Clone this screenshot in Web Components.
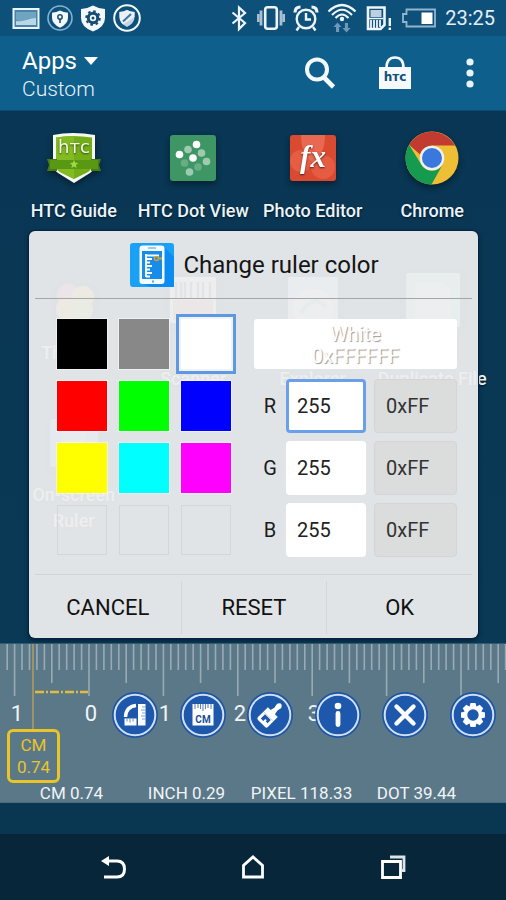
<!DOCTYPE html>
<html lang="en">
<head>
<meta charset="utf-8">
<meta name="viewport" content="width=device-width, initial-scale=1">
<title>On-screen Ruler</title>
<style>
html, body { margin: 0; }
body { font-family: Roboto, "Liberation Sans", sans-serif; color: #fff; background: #093651; }
</style>
</head>
<body>
<ruler-screen></ruler-screen>
<script>
const reset = `*{box-sizing:border-box} button{appearance:none;border:0;background:none;padding:0;margin:0;color:inherit;font:inherit;cursor:pointer} svg{display:block;flex:none}`;
function define(name, html, setup) {
  customElements.define(name, class extends HTMLElement {
    constructor() {
      super();
      this.attachShadow({ mode: 'open' });
    }
    connectedCallback() {
      if (this.shadowRoot.childNodes.length) return;
      const t = document.createElement('template');
      t.innerHTML = `<style>${reset}</style>` + (typeof html === 'function' ? html(this) : html);
      this.shadowRoot.append(t.content.cloneNode(true));
      if (setup) setup(this, this.shadowRoot);
    }
  });
}

define('status-bar', `
<style>
:host{display:flex;align-items:center;justify-content:space-between;height:36px;padding:0 11px 0 12px;background:#0d517a;color:#e4eef8}
.l{display:flex;align-items:center;gap:7px}
.r{display:flex;align-items:center;gap:8px}
time{font-size:20px;line-height:24px}
</style>
<div class="l">
<svg width="28" height="28" viewBox="0 0 28 28"><rect x="1.5" y="5" width="25" height="19" fill="#4d82a8" stroke="#eaf4fb" stroke-width="2"/><path d="M4 8h20v7q-6-2-10 1t-10 0z" fill="#6fa5c0"/><path d="M4 17q5 1 10-1t10-2v7H4z" fill="#b9d8e6"/></svg>
<svg width="26" height="28" viewBox="0 0 26 28"><circle cx="13" cy="14" r="12" fill="none" stroke="#86b3d4" stroke-width="1.6"/><path d="M13 6.500q3.500 2 8 2.200v5q0 6-8 10-8-4-8-10v-5q4.500-.2 8-2.200z" fill="#f3f8fc"/><circle cx="13" cy="13" r="2.200" fill="none" stroke="#174d73" stroke-width="1.500"/><path d="M13 15v4" stroke="#174d73" stroke-width="1.600"/></svg>
<svg width="26" height="28" viewBox="0 0 26 28"><path d="M13 1.500q5 3 12 3.500v9q0 9-12 13.500Q1 23 1 14V5q7-.5 12-3.500z" fill="#f3f8fc"/><circle cx="13" cy="14" r="4.700" fill="none" stroke="#174d73" stroke-width="3"/><circle cx="13" cy="14" r="6.800" fill="none" stroke="#174d73" stroke-width="2" stroke-dasharray="2.600 2.740"/><circle cx="13" cy="14" r="1.500" fill="#174d73"/></svg>
<svg width="28" height="30" viewBox="0 0 28 30"><circle cx="14" cy="15" r="12.800" fill="none" stroke="#f3f8fc" stroke-width="2"/><path d="M14 7q3.500 2 7.500 2v5q0 6-7.500 10-7.500-4-7.500-10V9q4 0 7.500-2z" fill="#c3d6e4"/><path d="M14 7q3.500 2 7.500 2v5L10 21.500q-3.500-3.500-3.500-8V9q4 0 7.500-2z" fill="#e9f1f7"/><path d="M10 18.500 18 11" stroke="#43749a" stroke-width="2"/></svg>
</div>
<div class="r">
<svg width="16" height="28" viewBox="2 0 16 28" overflow="visible" fill="none" stroke="#f0f6fb" stroke-width="2.200"><path d="M1.500 8.500 14 19l-6 6V3.500l6 5.500L1.500 19.500"/></svg>
<svg width="28" height="28" viewBox="0 0 28 28"><path d="M1 10v8M4 6.500v15M24 6.500v15M27 10v8" stroke="#a9bfd0" stroke-width="2.800"/><rect x="8.200" y="3.200" width="11.600" height="21.600" rx="2.500" fill="#0d517a" stroke="#f0f4f7" stroke-width="2.600"/></svg>
<svg width="26" height="28" viewBox="0 0 26 28" fill="none" stroke="#eef4f8" stroke-width="2.400"><circle cx="13" cy="15" r="9.300"/><path d="M13 9v6.500h5M6 23l-2.500 3.500M20 23l2.500 3.500"/><path d="M2 8.500Q2 3 7.500 3M24 8.500Q24 3 18.500 3" stroke-width="3.200"/></svg>
<svg width="30" height="30" viewBox="0 0 30 30" fill="none" stroke="#f0f5f8" stroke-width="2.200"><path d="M1.500 8.500Q15-4.500 28.500 8.500M5 12Q15 1.500 25 12M8.500 15Q15 8 21.500 15"/><circle cx="15" cy="16" r="2.200" fill="#f0f5f8" stroke="none"/><g fill="#6e98b8" stroke="none"><path d="m10.500 19.500 4 4.500h-2.400v5H9v-5H6.500zM19.500 29.500l-4-4.500h2.400v-5H21v5h2.500z"/></g></svg>
<svg width="28" height="28" viewBox="0 0 28 28"><path d="M3 3.500h16.500V21l-4 4H3z" fill="none" stroke="#eef4f8" stroke-width="2.600"/><rect x="5.500" y="6" width="11" height="7" fill="#bdd0df"/><path d="M6 16v8M9 16v8M12 16v8M15 16v7" stroke="#eef4f8" stroke-width="1.800"/><path d="M4 14.500h14" stroke="#eef4f8" stroke-width="1.500"/><path d="M24.800 14v8" stroke="#eef4f8" stroke-width="2.400"/><rect x="23.600" y="23.500" width="2.400" height="2.500" fill="#eef4f8"/></svg>
<svg width="36" height="28" viewBox="0 0 36 28"><path d="M5.500 5.500H34v17H5.500v-4.500H2v-8h3.500z" fill="none" stroke="#93b5cc" stroke-width="1.800"/><rect x="20.500" y="8.500" width="11" height="11.500" fill="#fff"/></svg>
<time>23:25</time>
</div>`);

define('app-header', `
<style>
:host{display:flex;align-items:center;justify-content:space-between;height:75px;padding:0 19px 0 22px;background:#0e5f8c;border-bottom:1px solid #0b4a72}
.title{padding-top:4px}
h1{margin:0;font-size:24px;line-height:28px;font-weight:400}
h1 button{display:flex;align-items:center;gap:7px}
p{margin:0;font-size:21px;line-height:28px;font-weight:300;color:#e6f2fa}
nav{display:flex;gap:41px}
</style>
<div class="title"><h1><button>Apps<svg width="14" height="8" viewBox="0 0 14 8"><path d="M0 0h14L7 8z" fill="#fff"/></svg></button></h1><p>Custom</p></div>
<nav>
<button aria-label="Search"><svg width="34" height="34" viewBox="0 0 34 34" fill="none" stroke="#f4f9fc"><circle cx="14" cy="13.500" r="10" stroke-width="4"/><path d="m20.500 21 10 10" stroke-width="4.600"/></svg></button>
<button aria-label="Store"><svg width="34" height="34" viewBox="0 0 34 34"><path d="M1 11h32v22H1z" fill="#f7fafc"/><path d="M8.500 12Q8.500 1.500 17 1.500T25.500 12" fill="none" stroke="#f7fafc" stroke-width="2.600"/><text x="17" y="25" font-family="DejaVu Sans" font-weight="700" font-size="12" text-anchor="middle" fill="#11507a">hтc</text></svg></button>
<button aria-label="More"><svg width="34" height="34" viewBox="0 0 34 34" fill="#e8f4fb"><circle cx="17" cy="6" r="3.600"/><circle cx="17" cy="17" r="3.600"/><circle cx="17" cy="28" r="3.600"/></svg></button>
</nav>`);

const art = {
guide: `<path d="M5 2q19-4 42 0v28q0 7-5 10L26 50 10 40q-5-3-5-10z" fill="#f6f9f3"/><path d="M8 4.500q16-3 36 0V31q0 5-4 8L26 46 12 39q-4-3-4-8z" fill="#73ae19"/><path d="M8 4.500Q17 3 26 3v43L12 39q-4-3-4-8z" fill="#82bb22"/><path d="M-1 26h10v12H-1l2-6zM53 26H43v12h10l-2-6z" fill="#467c13"/><path d="M2 27h48v9H2z" fill="#589812"/><path d="m26 27 1.200 2.800 3 .3-2.300 2 .7 3-2.600-1.600-2.600 1.600.7-3-2.300-2 3-.3z" fill="#a4d64a"/><text x="26" y="20" font-family="DejaVu Sans" font-size="18" text-anchor="middle" fill="#f5fbe8">hтc</text>`,
dot: `<rect x="3" y="2" width="46" height="46" rx="3" fill="#3e9664"/><g fill="#fff"><circle cx="29.500" cy="11.500" r="3.800"/><circle cx="12.500" cy="21.500" r="3.800"/><circle cx="26" cy="25" r="3.800"/><g opacity=".5"><circle cx="21" cy="16.500" r="3.800"/><circle cx="34.500" cy="20" r="3.800"/><circle cx="39.500" cy="28.500" r="3.800"/><circle cx="22.500" cy="39" r="3.800"/></g><g opacity=".22"><circle cx="17.500" cy="30" r="3.800"/><circle cx="31" cy="34" r="3.800"/></g></g>`,
photo: `<rect x="3" y="2" width="46" height="46" rx="3" fill="#d94a30"/><path d="M14 2h24q0 20-12 27Q14 22 14 2z" fill="#ef7560" opacity=".7"/><circle cx="14" cy="28" r="11" fill="#f16d55" opacity=".55"/><circle cx="36" cy="34" r="12" fill="#f16d55" opacity=".5"/><text x="26" y="34" font-family="Liberation Serif" font-weight="700" font-style="italic" font-size="31" text-anchor="middle" fill="#fff">fx</text>`,
chrome: `<circle cx="26" cy="25" r="26.500" fill="#eebf35"/><path d="M3.100 11.700A26.500 26.500 0 0 1 49 12.500H26a12.500 12.500 0 0 0-12 9z" fill="#c23b31"/><path d="M3.100 11.700A26.500 26.500 0 0 0 25.500 51.500L37 31a12.500 12.500 0 0 1-22.200-.2z" fill="#159a50"/><circle cx="26" cy="25" r="12.300" fill="#edf1f2"/><circle cx="26" cy="25" r="10" fill="#3a78dd"/>`,
themes: `<circle cx="20" cy="20" r="11" fill="#d8407c"/><circle cx="35" cy="22" r="11" fill="#e3b51c"/><circle cx="19" cy="34" r="11" fill="#f2a41f"/><circle cx="34" cy="35" r="11" fill="#9acc27"/>`,
barcode: `<rect x="3" y="2" width="46" height="46" rx="2" fill="#fff"/><path d="M9 7v16M14 7v16M18 7v16M24 7v16M31 7v16M36 7v16M43 7v16" stroke="#6b4034" stroke-width="2.500"/><path d="M6 25h40v20H6z" fill="#e57a6b"/>`,
explorer: `<rect x="1" y="2" width="50" height="50" rx="2" fill="#a8eaf2"/><circle cx="26" cy="34" r="20" fill="#fff"/><path d="M14 38q12-20 25-6" fill="none" stroke="#7bc3db" stroke-width="4"/>`,
dup: `<rect x="0" y="-2" width="54" height="54" rx="2" fill="#98ebe9"/><path d="M9 8h28l8 8v34H9z" fill="#fff"/>`,
ruler: `<rect x="2" y="2" width="48" height="48" rx="3" fill="#4bb4ff"/><rect x="14" y="6" width="24" height="40" fill="#a7d9ff"/>`
};
define('app-tile', el => `
<style>
:host{display:flex;flex-direction:column;align-items:center;min-width:0}
svg{overflow:visible;filter:drop-shadow(0 3px 3px #0006)}
a{display:flex;flex-direction:column;align-items:center;gap:13px;color:#eaf4fb;text-decoration:none;font-size:18px;line-height:26px;font-weight:500;text-align:center;white-space:nowrap;text-shadow:0 1px 2px #000a}
:host([low]) a{gap:39px}
</style>
<a href="#"><svg width="52" height="52" viewBox="0 0 52 52" aria-hidden="true">${art[el.getAttribute('icon')]}</svg><span><slot></slot></span></a>`);

define('home-grid', `
<style>
:host{display:grid;grid-template-columns:repeat(4,1fr);grid-auto-rows:142px;padding:22px 14px 0;background:linear-gradient(#093654,#093954)}
</style>
<app-tile icon="guide">HTC Guide</app-tile><app-tile icon="dot">HTC Dot View</app-tile><app-tile icon="photo">Photo Editor</app-tile><app-tile icon="chrome">Chrome</app-tile>
<app-tile icon="themes">Themes</app-tile><app-tile icon="barcode" low>Scanner</app-tile><app-tile icon="explorer" low>Explorer</app-tile><app-tile icon="dup" low>Duplicate File</app-tile>
<app-tile icon="ruler">On-screen<br>Ruler</app-tile>`);

define('color-swatch', el => `
<style>
:host{display:block}
button{display:block;width:100%;height:50px;background:${el.getAttribute('color') || 'transparent'};box-shadow:0 0 0 1px #ffffff70}
:host([selected]) button{outline:3px solid #5c99e2;outline-offset:2px;box-shadow:0 0 0 2px #f0f3f6}
:host(:not([color])) button{border:1px solid #d5d6d7;box-shadow:none}
</style>
<button aria-label="${el.getAttribute('name') || 'Empty colour slot'}"></button>`);

define('channel-row', el => `
<style>
:host{display:grid;grid-template-columns:1fr 80px 83px;column-gap:8px;align-items:center;color:#1c1c1c;font-size:20px}
label{text-align:center;margin-right:-8px}
input{width:100%;height:54px;border:0;border-radius:4px;padding:0 0 0 11px;margin:0;font:inherit;color:#222;background:#fff;outline:0}
.hex{background:#dbdddd;border:1px solid #d4d5d6;color:#333}
:host([active]) .dec{border:3px solid #6aa0ea;padding-left:8px}
</style>
<label for="v">${el.getAttribute('name')}</label><input class="dec" id="v" value="255" inputmode="numeric"><input class="hex" value="0xFF" readonly aria-label="${el.getAttribute('name')} hexadecimal">`);

define('color-dialog', `
<style>
:host{display:block;border-radius:6px;background:#ecedeef2;color:#151515;box-shadow:0 0 0 1px #06204a,0 2px 5px #0008}
header{display:flex;align-items:center;justify-content:center;gap:9px;height:68px;margin:0 6px;padding-left:2px;border-bottom:1px solid #a3a5a6}
h2{margin:0;font-size:24px;line-height:30px;font-weight:400}
.body{display:grid;grid-template-columns:174fr 203fr;column-gap:23px;padding:20px 21px 17px 28px}
.sw{display:grid;grid-template-columns:repeat(3,1fr);gap:12px;align-content:start}
.ch{display:grid;gap:8px;align-content:start}
output{display:block;height:50px;margin-bottom:2px;padding:4px 0;border-radius:3px;background:#fff;color:#fff;font-size:20px;line-height:22px;text-align:center;text-shadow:1px 1px 1px #999}
footer{display:grid;grid-template-columns:repeat(3,1fr);height:64px;margin:0 6px;padding:6px 0 4px;border-top:1px solid #d3d4d6}
footer button{font-size:22px;line-height:28px;color:#111}
footer button+button{border-left:1px solid #d5d6d8}
</style>
<header>
<svg width="44" height="44" viewBox="0 0 44 44"><rect width="44" height="44" rx="3" fill="#19a2f5"/><path d="m34 4 10 10v30H22L12 41z" fill="#0b8cf0"/><rect x="9.500" y="2.500" width="25" height="38.500" rx="3" fill="#f5faff"/><rect x="12" y="8" width="20" height="28" fill="#178ce9"/><path d="M18 5h8" stroke="#7fb6e0" stroke-width="1.400"/><path d="M16 11v23M16 12.500h13M16 16h6M16 19.500h4M16 23h6M16 26.500h4M16 30h6M16 33.500h4" stroke="#fff" stroke-width="1.800"/><circle cx="26.500" cy="15.500" r="2" fill="none" stroke="#d7a32b" stroke-width="1.500"/><path d="M22 38.500h2" stroke="#5aa6e0" stroke-width="2"/><path d="M29 15.500h3" stroke="#d7a32b" stroke-width="2"/></svg>
<h2>Change ruler color</h2></header>
<div class="body">
<div class="sw">
<color-swatch color="#000" name="Black"></color-swatch><color-swatch color="#888" name="Gray"></color-swatch><color-swatch color="#fff" name="White" selected></color-swatch>
<color-swatch color="#f00" name="Red"></color-swatch><color-swatch color="#0f0" name="Green"></color-swatch><color-swatch color="#00f" name="Blue"></color-swatch>
<color-swatch color="#ff0" name="Yellow"></color-swatch><color-swatch color="#0ff" name="Cyan"></color-swatch><color-swatch color="#f0f" name="Magenta"></color-swatch>
<color-swatch></color-swatch><color-swatch></color-swatch><color-swatch></color-swatch>
</div>
<div class="ch">
<output>White<br>0xFFFFFF</output>
<channel-row name="R" active></channel-row><channel-row name="G"></channel-row><channel-row name="B"></channel-row>
</div>
</div>
<footer><button>CANCEL</button><button>RESET</button><button>OK</button></footer>`);

const tooth = [0, 45, 90, 135].map(a => `<path transform="rotate(${a})" d="M-2.500-12h5l1 4h-7zM-2.500 12h5l1-4h-7z"/>`).join('');
const glyph = {
angle: `<path d="M-9.500 2Q-9-8.500 1-9.500" fill="none" stroke="#fff" stroke-width="3.400"/><path d="M3-11h7.500v21.500H3zM-10.500 3.500H1.500v7h-12z" fill="#fff"/><path d="M10.500-8H7M10.500-5H6M10.500-2H7M10.500 1H6M10.500 4H7M-8 3.500v3M-5 3.500v4M-2 3.500v3" stroke="#7f9fd2" stroke-width="1.200"/>`,
cm: `<path d="M-10.500-11h21v21.500h-21z" fill="#fff"/><path d="M-8-11v5M-5-11v4M-2.500-11v5M0-11v7M2.500-11v5M5-11v4M8-11v5" stroke="#6585b7" stroke-width="1.100"/><text y="7.500" font-family="Roboto" font-size="10" font-weight="700" text-anchor="middle" fill="#1b4f9d">CM</text>`,
brush: `<g transform="rotate(45)" fill="#fff"><path d="M-3-4-2-8.500-3-13Q0-18.500 3-13L2-8.500 3-4H7V2H-7v-6z"/><path d="M-7 2H7v8q0 2-2 2H-5q-2 0-2-2z"/><path d="M-4 3h8v4.500H1.500V6h-2v3H-4z" fill="#1d58ac"/></g>`,
info: `<circle cy="-9" r="3.300" fill="#fff"/><path d="M0-1.500V9.500" stroke="#fff" stroke-width="4.800" stroke-linecap="round"/>`,
close: `<path d="M-8.500-8.500 8.500 8.500M8.500-8.500-8.500 8.500" stroke="#fff" stroke-width="4.400" stroke-linecap="round"/>`,
gear: `<circle r="7.400" fill="none" stroke="#fff" stroke-width="3.400"/><g fill="#fff">${tooth}</g>`
};
define('tool-button', el => `
<style>:host{display:block}button{display:block;border-radius:50%}</style>
<button aria-label="${el.getAttribute('label')}"><svg width="46" height="46" viewBox="-23 -23 46 46"><circle r="23" fill="#1c55a6"/><circle r="20.300" fill="#1d58ac" stroke="#d3e0f3" stroke-width="2"/>${glyph[el.getAttribute('icon')]}</svg></button>`);

define('ruler-panel', `
<style>
:host{display:block;position:relative;background:#5b7889;border-top:1px solid #315a72;border-bottom:1px solid #476b81}
.top{display:grid;height:94px}
.top>*{grid-area:1/1;min-width:0}
.scale{width:100%;height:94px;overflow:hidden}
.tools{display:flex;justify-content:space-between;align-items:end;padding:0 10px 0 112px}
.cursor{position:absolute;left:7px;top:85px;width:53px;border:3px solid #e9c528;border-radius:6px;padding:2px 0;color:#e9c528;font-size:17px;line-height:22px;text-align:center}
.read{display:grid;grid-template-columns:repeat(4,1fr);margin-top:46px;padding:0 32px 0 14px;font-size:17px;line-height:18px;text-align:center;white-space:nowrap;color:#f0f4f6}
</style>
<div class="top"><svg class="scale"></svg>
<div class="tools"><tool-button icon="angle" label="Protractor"></tool-button><tool-button icon="cm" label="Unit"></tool-button><tool-button icon="brush" label="Color"></tool-button><tool-button icon="info" label="Info"></tool-button><tool-button icon="close" label="Close"></tool-button><tool-button icon="gear" label="Settings"></tool-button></div></div>
<div class="cursor">CM<br>0.74</div>
<div class="read"><span>CM 0.74</span><span>INCH 0.29</span><span>PIXEL 118.33</span><span>DOT 39.44</span></div>`, (el, root) => {
  const zero = 89, cm = 74.4;
  let s = '';
  for (let i = -11; i < 200; i++) {
    const x = zero + i * cm / 10;
    const len = i % 10 === 0 ? 52 : i % 5 === 0 ? 39 : 26;
    s += `<path d="M${x.toFixed(1)} 0v${len}" stroke="#b1bec5" stroke-opacity=".72" stroke-width="1.600"/>`;
  }
  for (let n = -1; n < 4; n++)
    s += `<text x="${Math.round(zero + n * cm + 2)}" y="77" font-size="22" text-anchor="middle" fill="#f0f4f6">${Math.abs(n)}</text>`;
  s += '<path d="M33 0v86" stroke="#b09a60" stroke-width="1.600"/><path d="M35 48h53" stroke="#e3bd3a" stroke-width="2.400" stroke-dasharray="9 2 2 2"/>';
  root.querySelector('.scale').innerHTML = s;
});

define('nav-bar', `
<style>
:host{display:grid;grid-template-columns:repeat(3,1fr);height:66px;padding:0 43px;background:#07263a}
button{display:grid;place-items:center}
</style>
<button aria-label="Back"><svg width="26" height="26" viewBox="0 0 26 26"><path d="M7 7h10q7.500 0 7.500 8T17 23H4" fill="none" stroke="#fff" stroke-width="3"/><path d="M1 7 9 2v10z" fill="#fff"/></svg></button>
<button aria-label="Home"><svg width="26" height="26" viewBox="0 0 26 26"><path d="M3.500 23V11.500L13 3l9.500 8.500V23z" fill="none" stroke="#fff" stroke-width="2.800"/></svg></button>
<button aria-label="Recent apps"><svg width="26" height="26" viewBox="0 0 26 26" fill="none" stroke="#fff" stroke-width="2.800"><path d="M2.500 7.500h18v16h-18z"/><path d="M10 3h14v13.500h-3" stroke="#dce3e8"/></svg></button>`);

define('ruler-screen', `
<style>
:host{display:flex;flex-direction:column;min-height:100vh}
main{position:relative;flex:1;display:grid}
color-dialog{position:absolute;top:120px;left:29px;right:28px}
nav-bar{margin-top:31px}
</style>
<status-bar></status-bar><app-header></app-header>
<main><home-grid></home-grid><color-dialog role="dialog" aria-label="Change ruler color"></color-dialog></main>
<ruler-panel></ruler-panel><nav-bar></nav-bar>`);
</script>
</body>
</html>
